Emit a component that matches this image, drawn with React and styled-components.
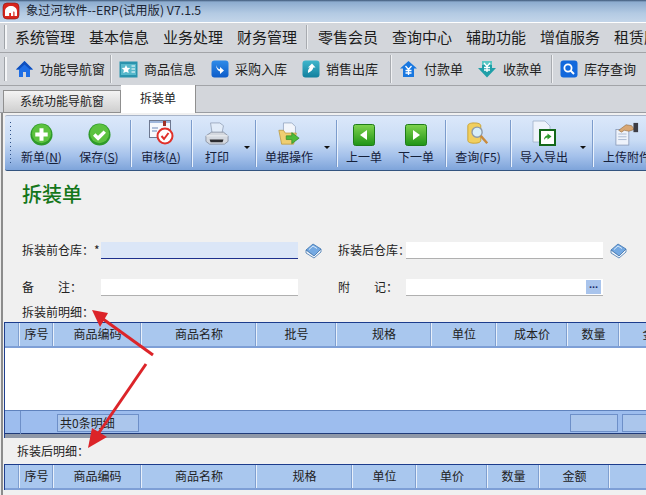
import styled, { createGlobalStyle } from 'styled-components';

const GlobalStyle = createGlobalStyle`
    html, body { margin:0; padding:0; background:#fff; }
    body { font-family:"Noto Sans CJK SC","Liberation Sans",sans-serif; color:#222; }
`

const MENU = ['系统管理', '基本信息', '业务处理', '财务管理', null, '零售会员', '查询中心', '辅助功能', '增值服务', '租赁服务'];

const COLS_TOP = [['', 15], ['序号', 34], ['商品编码', 88], ['商品名称', 115], ['批号', 80], ['规格', 95], ['单位', 65], ['成本价', 71], ['数量', 52], ['金额', 70]];
const COLS_BOTTOM = [['', 15], ['序号', 34], ['商品编码', 88], ['商品名称', 115], ['规格', 96], ['单位', 64], ['单价', 71], ['数量', 52], ['金额', 70], ['', 40]];

function AppLogo() {
    return (
        <svg width="18" height="18" viewBox="0 0 18 18">
            <rect x="1" y="1" width="16" height="16" rx="4" fill="#d8251d" stroke="#8c1410" strokeWidth="0.6"/>
            <path d="M3 14V9c0-3 3-5 6-5s6 2 6 5v5h-2.500V10.500c0-.8-.6-1.200-1.200-1V14H9v-3H7.200v3z" fill="#fff"/>
        </svg>
    )
}

function HomeIcon() {
    return (
        <svg width="19" height="18" viewBox="0 0 19 18">
            <path d="M9.500 1L1 9.500h3V17h4v-5h3v5h4V9.500h3z" fill="#1e6ee6"/>
            <path d="M9.500 1L1 9.500h3L9.500 4.500 15 9.500h3z" fill="#0f4fbe"/>
        </svg>
    )
}

function GoodsIcon() {
    return (
        <svg width="19" height="17" viewBox="0 0 19 17">
            <rect x="0.500" y="0.500" width="18" height="16" fill="#2a93ad"/>
            <rect x="2" y="3" width="15" height="11" fill="#57b8cb"/>
            <path d="M7 4l1.300 2.800 3 .3-2.200 2 .6 3L7 10.700 4.300 12.100l.6-3-2.200-2 3-.3z" fill="#fff"/>
            <path d="M12.500 5H16M12.500 8H16M12.500 11H16" stroke="#fff" strokeWidth="1.200"/>
        </svg>
    )
}

function SquareArrow({ from = '#2f8be8', to = '#0d5cc9', flip }) {
    const id = `sq${from.slice(1)}${flip ? 'f' : ''}`;
    return (
        <svg width="18" height="18" viewBox="0 0 18 18">
            <defs><linearGradient id={id} x1="0" y1="0" x2="0" y2="1"><stop offset="0" stopColor={from}/><stop offset="1" stopColor={to}/></linearGradient></defs>
            <rect x="0.500" y="0.500" width="17" height="17" rx="3" fill={`url(#${id})`}/>
            {flip
                ? <path d="M6 13c-.5-3 1-4.500 2-5.500H6L10 3.500l3.500 4h-2.200c-.2 2-2 4-5.300 5.500z" fill="#fff"/>
                : <path d="M5 5c1 3 2.500 4 4 4.300V7l4 3.500L9 14v-2.500C7 11 5.300 9 5 5z" fill="#fff"/>}
        </svg>
    )
}

function PayIcon() {
    return (
        <svg width="19" height="18" viewBox="0 0 19 18">
            <path d="M9.500 1L1 8.500h3V17h11V8.500h3z" fill="#1877e0"/>
            <path d="M6.500 6l3 3.500 3-3.500M6.500 10.500h6M6.500 13h6M9.500 9.500V15" stroke="#fff" strokeWidth="1.300" fill="none"/>
        </svg>
    )
}

function ReceiveIcon() {
    return (
        <svg width="20" height="18" viewBox="0 0 20 18">
            <path d="M5 1h10v7h4l-9 9.500L1 8h4z" fill="#1f9fa8"/>
            <path d="M5 1h10v4H5z" fill="#5ac7c4"/>
            <path d="M7 3l3 3.500L13 3M7 7.500h6M7 10h6M10 6.500V12" stroke="#fff" strokeWidth="1.300" fill="none"/>
        </svg>
    )
}

function SearchSquare() {
    return (
        <svg width="18" height="18" viewBox="0 0 18 18">
            <rect x="0.500" y="0.500" width="17" height="17" rx="3" fill="#1268dc"/>
            <circle cx="8" cy="8" r="3.600" fill="none" stroke="#fff" strokeWidth="1.800"/>
            <path d="M10.500 10.500l3.500 3.500" stroke="#fff" strokeWidth="2"/>
        </svg>
    )
}

function GreenCircle({ check }) {
    return (
        <svg width="23" height="23" viewBox="0 0 24 24">
            <circle cx="12" cy="12" r="11.500" fill="#2f9a2a"/>
            <circle cx="12" cy="11" r="10" fill="#5cc23f"/>
            {check
                ? <path d="M6.500 12l4 4 7-7" fill="none" stroke="#fff" strokeWidth="3.600"/>
                : <path d="M12 5.500v13M5.500 12h13" fill="none" stroke="#fff" strokeWidth="4.200"/>}
        </svg>
    )
}

function AuditIcon() {
    return (
        <svg width="25" height="26" viewBox="0 0 25 26">
            <rect x="0.500" y="0.500" width="21" height="17" fill="#f6f8fd" stroke="#6d7890"/>
            <path d="M1 1h20v2H1z" fill="#9fb6dc"/>
            <path d="M3 8h6M3 11h5" stroke="#6d87b8"/>
            <rect x="14" y="1" width="3" height="5" fill="#a03028"/>
            <circle cx="16" cy="16" r="7.500" fill="#fff" stroke="#e0302a" strokeWidth="2"/>
            <path d="M12.500 16l2.500 3 4.500-6" fill="none" stroke="#e0302a" strokeWidth="2"/>
        </svg>
    )
}

function PrinterIcon() {
    return (
        <svg width="24" height="24" viewBox="0 0 26 26">
            <path d="M6 1h10l4 3-2 10H8z" fill="#e2ecf9" stroke="#8d9bb0" strokeWidth="0.800"/>
            <path d="M1 15l6-4h13l5 4v6l-4 3H5l-4-3z" fill="#d4d8df" stroke="#7c8494" strokeWidth="0.800"/>
            <path d="M5 19h15l-1 3H6z" fill="#2c2c30"/>
            <path d="M1 15h24" stroke="#f0f2f6"/>
        </svg>
    )
}

function FolderIcon() {
    return (
        <svg width="24" height="24" viewBox="0 0 24 26">
            <path d="M6 1h9l4 4v10H6z" fill="#f2f5fb" stroke="#8ea0bb" strokeWidth="0.800"/>
            <path d="M1 9h5l2 3h12l-3 12H4z" fill="#efce71" stroke="#b9953a" strokeWidth="0.800"/>
            <path d="M9 15h6v-3.500l8 6-8 6V19H9z" fill="#4fbb3a" stroke="#2c8425" strokeWidth="0.700"/>
        </svg>
    )
}

function NavSquare({ right }) {
    return (
        <svg width="22" height="22" viewBox="0 0 22 22">
            <defs><linearGradient id="navg" x1="0" y1="0" x2="0" y2="1"><stop offset="0" stopColor="#7fd34e"/><stop offset="1" stopColor="#1f9416"/></linearGradient></defs>
            <rect x="0.500" y="0.500" width="21" height="21" rx="2" fill="url(#navg)" stroke="#1f7c18"/>
            <path d={right ? 'M8 6l7 5-7 5z' : 'M14 6l-7 5 7 5z'} fill="#fff"/>
        </svg>
    )
}

function QueryIcon() {
    return (
        <svg width="24" height="24" viewBox="0 0 24 26">
            <path d="M1 4c0-2 3-3 7-3s7 1 7 3v16c0 2-3 3-7 3s-7-1-7-3z" fill="#f1cf5f" stroke="#c9a02c"/>
            <circle cx="11" cy="11" r="5.500" fill="#d7eefa" stroke="#8e9aa8" strokeWidth="1.500"/>
            <path d="M15 15l7 8" stroke="#c98a3c" strokeWidth="2.600"/>
        </svg>
    )
}

function ImportIcon() {
    return (
        <svg width="24" height="26" viewBox="0 0 24 26">
            <path d="M1 1h12l5 5v16H1z" fill="#eef3fb" stroke="#9fb0c9" strokeWidth="0.800"/>
            <rect x="8" y="10" width="15" height="15" fill="#fff" stroke="#14681a" strokeWidth="2"/>
            <path d="M12 20c0-3 1.500-4.500 3.500-4.800V13.500l4 3-4 3v-2c-1.500.2-2.500 1-3.500 2.500z" fill="#2a9a2a"/>
        </svg>
    )
}

function UploadIcon() {
    return (
        <svg width="24" height="24" viewBox="0 0 26 26">
            <rect x="1" y="8" width="14" height="17" fill="#eef3fb" stroke="#8092b0" strokeWidth="0.800"/>
            <path d="M3.500 13h9M3.500 16h9M3.500 19h9" stroke="#a8b8d0"/>
            <path d="M4 9l8-6 6 1 3 4-6 2-5-1-3 2z" fill="#d8a774" stroke="#8a6236" strokeWidth="0.600"/>
            <rect x="20" y="1" width="5" height="10" fill="#3c3c44"/>
        </svg>
    )
}

function BookIcon() {
    return (
        <svg width="17" height="16" viewBox="0 0 17 16">
            <path d="M1 7l7-6 8 5-7 7z" fill="#74a9e2" stroke="#3f74ad" strokeWidth="0.800"/>
            <path d="M1 7v3l8 5 7-6V6l-7 7z" fill="#f4f7fb" stroke="#3f74ad" strokeWidth="0.800"/>
            <path d="M4 6.500l4-3.500 4 2.500" fill="none" stroke="#d8e8f8"/>
        </svg>
    )
}

function DataTable({ cols, children }) {
    return (
        <TableWrap>
            <HeaderRow>
                {cols.map(([label, w], i) => <HeaderCell key={i} $w={w}>{label}</HeaderCell>)}
            </HeaderRow>
            {children}
        </TableWrap>
    )
}

export default function App() {
    return (
        <Page>
            <GlobalStyle/>
            <TitleBar>
                <AppLogo/>
                <TitleText>象过河软件--ERP(试用版) V7.1.5</TitleText>
            </TitleBar>
            <MenuBar>
                <Grip/>
                {MENU.map((m, i) => m ? <MenuItem key={i}>{m}</MenuItem> : <MenuSep key={i}/>)}
            </MenuBar>
            <NavBar>
                <NavGrip/>
                <NavItem $w={103}><HomeIcon/>功能导航窗</NavItem>
                <NavSep/>
                <NavItem $w={92}><GoodsIcon/>商品信息</NavItem>
                <NavItem $w={91}><SquareArrow/>采购入库</NavItem>
                <NavItem $w={96}><SquareArrow from="#3fb6cc" to="#12809e" flip/>销售出库</NavItem>
                <NavSep/>
                <NavItem $w={78}><PayIcon/>付款单</NavItem>
                <NavItem $w={82}><ReceiveIcon/>收款单</NavItem>
                <NavSep/>
                <NavItem $w={90}><SearchSquare/>库存查询</NavItem>
            </NavBar>
            <TabStrip>
                <Tab>系统功能导航窗</Tab>
                <TabActive>拆装单</TabActive>
            </TabStrip>
            <Content>
                <ToolBar>
                    <ToolGrip/>
                    <ToolButton $w={57}><GreenCircle/><ToolLabel>新单(<u>N</u>)</ToolLabel></ToolButton>
                    <ToolButton $w={58}><GreenCircle check/><ToolLabel>保存(<u>S</u>)</ToolLabel></ToolButton>
                    <ToolSep/>
                    <ToolButton $w={56}><AuditIcon/><ToolLabel>审核(<u>A</u>)</ToolLabel></ToolButton>
                    <ToolSep/>
                    <ToolButton $w={46}><PrinterIcon/><ToolLabel>打印</ToolLabel></ToolButton>
                    <Caret $w={13}/>
                    <ToolSep/>
                    <ToolButton $w={62}><FolderIcon/><ToolLabel>单据操作</ToolLabel></ToolButton>
                    <Caret $w={14}/>
                    <ToolSep/>
                    <ToolButton $w={50}><NavSquare/><ToolLabel>上一单</ToolLabel></ToolButton>
                    <ToolButton $w={54}><NavSquare right/><ToolLabel>下一单</ToolLabel></ToolButton>
                    <ToolSep/>
                    <ToolButton $w={60}><QueryIcon/><ToolLabel>查询(F5)</ToolLabel></ToolButton>
                    <ToolSep/>
                    <ToolButton $w={62}><ImportIcon/><ToolLabel>导入导出</ToolLabel></ToolButton>
                    <Caret $w={15}/>
                    <ToolSep/>
                    <ToolButton $w={64}><UploadIcon/><ToolLabel>上传附件</ToolLabel></ToolButton>
                </ToolBar>
                <FormArea>
                    <PageTitle>拆装单</PageTitle>
                    <FormRow>
                        <FieldLabel $w={79}>拆装前仓库：*</FieldLabel>
                        <Input $active/>
                        <BookSlot><BookIcon/></BookSlot>
                        <FieldLabel $w={68}>拆装后仓库：</FieldLabel>
                        <Input/>
                        <BookSlot><BookIcon/></BookSlot>
                    </FormRow>
                    <FormRow>
                        <FieldLabel $w={79}>备　　注：</FieldLabel>
                        <Input/>
                        <BookSlot/>
                        <FieldLabel $w={68}>附　　记：</FieldLabel>
                        <Input><MoreButton>...</MoreButton></Input>
                    </FormRow>
                    <SectionLabel>拆装前明细：</SectionLabel>
                </FormArea>
                <DataTable cols={COLS_TOP}>
                    <TableBody/>
                    <FooterRow>
                        <FooterCell $w={16}/>
                        <FooterBox $left={36} $w={82}>共0条明细</FooterBox>
                        <FooterSpacer/>
                        <FooterBox $w={48}/>
                        <FooterBox $left={4} $w={40}/>
                    </FooterRow>
                </DataTable>
                <SectionLabelBottom>拆装后明细：</SectionLabelBottom>
                <DataTable cols={COLS_BOTTOM}/>
            </Content>
            <Arrows viewBox="0 0 646 495" width="646" height="495">
                <path d="M153 355L103 319" stroke="#dc2429" strokeWidth="3"/>
                <path d="M92 310l16 3-8 14z" fill="#dc2429"/>
                <path d="M146 364L98 434" stroke="#dc2429" strokeWidth="3"/>
                <path d="M88 448l4-20 15 9z" fill="#dc2429"/>
            </Arrows>
        </Page>
    )
}

const Page = styled.div`
    position:relative;
    width:646px;
    height:495px;
    overflow:hidden;
    display:flex;
    flex-direction:column;
    background:#fff;
`

const TitleBar = styled.div`
    box-sizing:border-box;
    height:22px;
    flex:none;
    display:flex;
    align-items:center;
    gap:6px;
    padding:0 0 1px 2px;
    background:linear-gradient(#3c5676 0, #8daccf 2px, #b3cae3 60%, #c3d5e9 100%);
    svg { flex:none; }
`

const TitleText = styled.span`
    font-size:12.300px;
    line-height:16px;
    margin-top:-2px;
    color:#1c2533;
`

const MenuBar = styled.div`
    box-sizing:border-box;
    height:30px;
    flex:none;
    margin-top:1px;
    display:flex;
    align-items:center;
    gap:14px;
    padding:0 0 2px 4px;
    background:#d3d6db;
    border-bottom:1px solid #a2a4a8;
    overflow:hidden;
    white-space:nowrap;
`

const Grip = styled.div`
    flex:none;
    width:2px;
    height:24px;
    margin-right:-6px;
    background:#f4f5f7;
    border-left:1px solid #9fa3a8;
`

const NavGrip = styled(Grip)`
    margin-right:0;
`

const MenuItem = styled.div`
    flex:none;
    width:60px;
    font-size:15px;
    color:#1c1c1c;
`

const MenuSep = styled.div`
    flex:none;
    width:1px;
    height:24px;
    margin:0 -3px 0 -5px;
    background:#a8abb0;
    box-shadow:1px 0 0 #eceef0;
`

const NavBar = styled.div`
    box-sizing:border-box;
    height:33px;
    flex:none;
    display:flex;
    align-items:center;
    padding-left:4px;
    background:#d3d6db;
    border-bottom:1px solid #a2a4a8;
    white-space:nowrap;
    overflow:hidden;
`

const NavItem = styled.div`
    flex:none;
    box-sizing:border-box;
    width:${p => p.$w}px;
    display:flex;
    align-items:center;
    gap:6px;
    padding-left:8px;
    font-size:13px;
    line-height:16px;
    color:#222;
    svg { flex:none; }
`

const NavSep = styled.div`
    flex:none;
    width:1px;
    height:28px;
    background:#a8abb0;
    box-shadow:1px 0 0 #f0f1f3;
`

const TabStrip = styled.div`
    box-sizing:border-box;
    height:27px;
    flex:none;
    display:flex;
    align-items:flex-end;
    padding-left:3px;
    background:#d3d6db;
    border-bottom:1px solid #9a9da2;
`

const Tab = styled.div`
    box-sizing:border-box;
    width:118px;
    height:23px;
    margin-bottom:-1px;
    text-align:center;
    line-height:20px;
    font-size:12px;
    background:linear-gradient(#f4f4f4, #cfcfcf);
    border:1px solid #8f8f8f;
`

const TabActive = styled.div`
    box-sizing:border-box;
    width:75px;
    height:28px;
    margin-bottom:-1px;
    text-align:center;
    line-height:25px;
    font-size:12px;
    background:#fff;
    border-right:1px solid #8f8f8f;
`

const Content = styled.div`
    flex:1;
    min-height:0;
    padding:2px 0 0 4px;
    display:flex;
    flex-direction:column;
    background:linear-gradient(90deg, #ececec 1px, #8c8c8c 1px, #8c8c8c 3px, #f0f0f0 3px);
`

const ToolBar = styled.div`
    box-sizing:border-box;
    height:56px;
    flex:none;
    margin-left:1px;
    display:flex;
    align-items:stretch;
    padding-left:5px;
    white-space:nowrap;
    overflow:hidden;
    background:linear-gradient(#dbe8fa 0%, #c9dcf5 45%, #a3c0ea 75%, #7ea4da 100%);
    border-top:1px solid #a8b4c8;
    border-bottom:1px solid #33547f;
    border-radius:2px 0 0 2px;
`

const ToolGrip = styled.div`
    flex:none;
    width:3px;
    margin:6px 0 4px;
    background:repeating-linear-gradient(#2d4f86 0 1px, transparent 1px 4px) 0 0 / 1px 100% no-repeat;
`

const ToolButton = styled.div`
    flex:none;
    box-sizing:border-box;
    width:${p => p.$w}px;
    height:100%;
    display:flex;
    flex-direction:column;
    align-items:center;
    justify-content:flex-end;
    gap:2px;
    padding-bottom:4px;
    svg { flex:none; }
`

const ToolLabel = styled.span`
    font-size:12px;
    line-height:18px;
    color:#15203a;
`

const ToolSep = styled.div`
    flex:none;
    width:1px;
    margin:4px 2px 3px;
    background:#7c9ccc;
    box-shadow:1px 0 0 #eaf2fd;
`

const Caret = styled.div`
    flex:none;
    width:${p => p.$w}px;
    position:relative;
    &::after {
        content:"";
        position:absolute;
        left:50%;
        top:30px;
        margin-left:-3px;
        border:3px solid transparent;
        border-top:3px solid #111;
    }
`

const FormArea = styled.div`
    flex:none;
    height:151px;
    box-sizing:border-box;
    padding-left:18px;
    display:flex;
    flex-direction:column;
    background:#f0f0f0;
`

const PageTitle = styled.div`
    height:71px;
    line-height:46px;
    font-size:20px;
    font-weight:500;
    color:#14761a;
`

const FormRow = styled.div`
    height:37px;
    display:flex;
    align-items:flex-start;
`

const FieldLabel = styled.div`
    flex:none;
    width:${p => p.$w}px;
    font-size:12px;
    line-height:16px;
    white-space:nowrap;
    color:#222;
`

const Input = styled.div`
    flex:none;
    position:relative;
    box-sizing:border-box;
    width:197px;
    height:17px;
    background:${p => p.$active ? '#dbe6f7' : '#fff'};
    border-bottom:1px solid ${p => p.$active ? '#1d2f8c' : '#b0b0b0'};
`

const BookSlot = styled.div`
    flex:none;
    width:40px;
    padding-left:7px;
    height:17px;
    box-sizing:border-box;
    display:flex;
    align-items:center;
    svg { flex:none; }
`

const MoreButton = styled.div`
    position:absolute;
    right:2px;
    top:1px;
    width:15px;
    height:14px;
    line-height:9px;
    text-align:center;
    font-family:"Liberation Sans",sans-serif;
    font-size:11px;
    font-weight:700;
    color:#1c2d6b;
    background:#a9c4ec;
`

const SectionLabel = styled.div`
    margin-top:-13px;
    font-size:12px;
    line-height:18px;
    color:#222;
`

const SectionLabelBottom = styled.div`
    flex:none;
    height:26px;
    padding-left:13px;
    font-size:12px;
    line-height:25px;
    background:#f0f0f0;
`

const TableWrap = styled.div`
    flex:none;
    display:flex;
    flex-direction:column;
    border-left:1px solid #1f3f8f;
    background:#fff;
`

const HeaderRow = styled.div`
    box-sizing:border-box;
    height:26px;
    display:flex;
    overflow:hidden;
    background:#a9c7ee;
    border-top:1px solid #1c3c8c;
    border-bottom:2px solid #7e9fd6;
`

const HeaderCell = styled.div`
    flex:none;
    box-sizing:border-box;
    width:${p => p.$w}px;
    text-align:center;
    font-size:12px;
    line-height:22px;
    color:#222;
    white-space:nowrap;
    border-right:1px solid #e8f0fb;
    box-shadow:inset -1px 0 0 #7f9fd0;
`

const TableBody = styled.div`
    height:62px;
    background:#fff;
`

const FooterRow = styled.div`
    box-sizing:border-box;
    height:28px;
    display:flex;
    align-items:center;
    overflow:hidden;
    background:#9dbdee;
    border-top:1px solid #5f82bd;
    border-bottom:4px solid #8f98a8;
    box-shadow:inset 0 -1px 0 #1f3a78;
`

const FooterCell = styled.div`
    flex:none;
    box-sizing:border-box;
    width:${p => p.$w}px;
    height:100%;
    border-right:1px solid #6d8fc8;
`

const FooterBox = styled.div`
    flex:none;
    box-sizing:border-box;
    width:${p => p.$w}px;
    height:18px;
    margin-left:${p => p.$left || 0}px;
    padding-left:2px;
    font-size:12px;
    line-height:15px;
    background:#abc6ec;
    border:1px solid #6d8fc8;
    white-space:nowrap;
`

const FooterSpacer = styled.div`
    flex:none;
    width:431px;
`

const Arrows = styled.svg`
    position:absolute;
    left:0;
    top:0;
    pointer-events:none;
`
